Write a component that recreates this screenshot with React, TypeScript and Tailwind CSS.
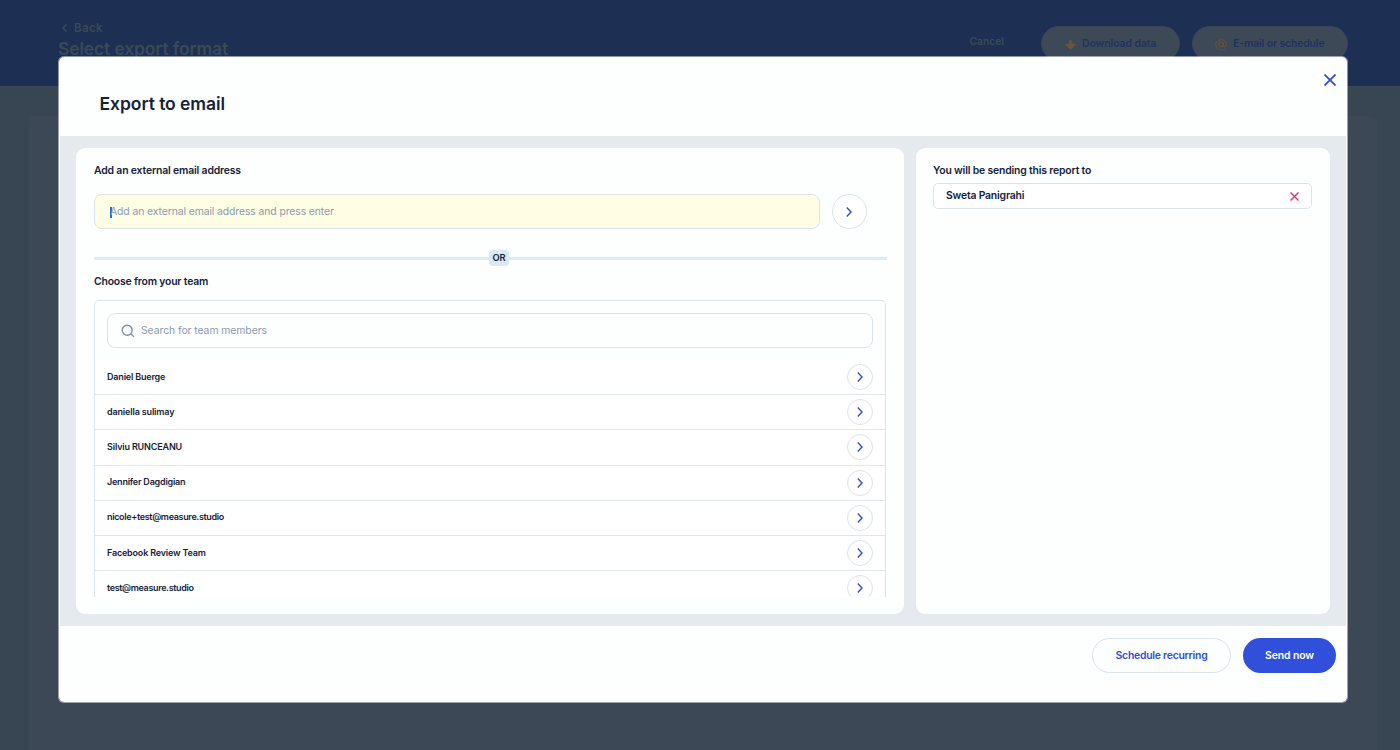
import type { ReactNode } from "react";

const members = [
  { name: "Daniel Buerge", tracking: "tracking-[-0.182px]" },
  { name: "daniella sulimay", tracking: "tracking-[-0.15px]" },
  { name: "Silviu RUNCEANU", tracking: "tracking-[-0.164px]" },
  { name: "Jennifer Dagdigian", tracking: "tracking-[-0.221px]" },
  { name: "nicole+test@measure.studio", tracking: "tracking-[-0.332px]" },
  { name: "Facebook Review Team", tracking: "tracking-[-0.185px]" },
  { name: "test@measure.studio", tracking: "tracking-[-0.353px]" },
];

function Chevron() {
  return (
    <svg className="-ml-px" width="6" height="10" viewBox="0 0 6 10" fill="none" stroke="#2f4fdc" strokeWidth="1.4">
      <path d="M0.8 0.5 5 5 0.8 9.5" />
    </svg>
  );
}

function Cross({ size, color, width }: { size: number; color: string; width: number }) {
  return (
    <svg width={size} height={size} viewBox={`0 0 ${size} ${size}`} stroke={color} strokeWidth={width}>
      <path d={`M0.5 0.5 ${size - 0.5} ${size - 0.5} M${size - 0.5} 0.5 0.5 ${size - 0.5}`} />
    </svg>
  );
}

function Label({ children, className }: { children: ReactNode; className: string }) {
  return <h2 className={`text-[10.4px] leading-4 font-semibold whitespace-nowrap ${className}`}>{children}</h2>;
}

function PageBehind() {
  return (
    <div className="flex h-full flex-col">
      <header className="flex h-[86px] shrink-0 justify-between bg-[#1d2f52] pr-[52px] pl-[58px] text-[#3a4a57]">
        <div className="pt-[20px]">
          <div className="flex items-center gap-[7px] pl-[4px] text-[11.5px] leading-4 font-semibold tracking-[0.39px]">
            <svg width="5" height="8" viewBox="0 0 5 8" fill="none" stroke="currentColor" strokeWidth="1.4">
              <path d="M4.4 0.6 1 4l3.4 3.4" />
            </svg>
            Back
          </div>
          <h1 className="mt-[1px] text-[17.5px] leading-6 font-semibold tracking-[-0.15px]">Select export format</h1>
        </div>
        <div className="flex pt-[26px] text-[10.4px] font-semibold">
          <span className="mr-[37px] pt-[8px] leading-4 tracking-[-0.07px]">Cancel</span>
          <div className="mr-[12px] flex h-[35px] w-[139px] items-center rounded-full border border-[#374555] bg-[#3e4957] pl-[23px] text-[#1f3360]">
            <svg className="mt-[2px] mr-[6px]" width="11" height="10" viewBox="0 0 11 10" fill="#65563c">
              <path d="M4.200 0h2.600v3.400q2 .3 4.200 0.800L5.500 10 0 4.200q2.200-.5 4.200-.8z" />
            </svg>
            <span className="tracking-[-0.05px]">Download data</span>
          </div>
          <div className="flex h-[35px] w-[156px] items-center rounded-full border border-[#374555] bg-[#3e4957] pl-[22px] text-[#1f3360]">
            <svg className="mt-[2px] mr-[6px]" width="12" height="12" viewBox="0 0 24 24" fill="none" stroke="#5f533e" strokeWidth="2.2">
              <circle cx="12" cy="11" r="4.500" />
              <path d="M16.500 6.500v6a3 3 0 0 0 6 0V11A10.500 10 0 1 0 12 21.500h9" />
            </svg>
            <span className="tracking-[-0.117px]">E-mail or schedule</span>
          </div>
        </div>
      </header>
      <main className="flex grow pt-[30px] pr-[23px] pl-[29px]">
        <div className="grow rounded-t-md bg-[#3d4856]" />
      </main>
    </div>
  );
}

export default function App() {
  return (
    <div className="relative h-[750px] w-[1400px] overflow-hidden bg-[#384552] font-['Inter',sans-serif] text-[#14233a]">
      <PageBehind />
      <div className="absolute top-[56px] left-[58px] flex h-[647px] w-[1290px] flex-col overflow-hidden rounded-[6px] border border-white/50 bg-[#fdfefe] bg-clip-padding">
        <div className="flex h-[79px] shrink-0 justify-between pr-[11px] pl-[40.5px]">
          <h1 className="pt-[35px] text-[17.5px] leading-6 font-semibold tracking-[-0.05px]">Export to email</h1>
          <button className="mt-[17px] h-3 w-3">
            <Cross size={12} color="#2746dc" width={1.7} />
          </button>
        </div>

        <div className="mx-px flex h-[490px] shrink-0 gap-[12px] bg-[#e5eaee] px-[16px] py-[12px]">
          <section className="flex w-[828px] flex-col rounded-[9px] bg-[#fdfefe] pt-[15px] pr-[18px] pb-[17px] pl-[18px]">
            <Label className="tracking-[-0.158px]">Add an external email address</Label>
            <div className="mt-[15px] flex gap-[12px]">
              <div className="flex h-[35px] w-[726px] items-center rounded-[8px] border border-[#dbe3e9] bg-[#fffde3] pt-px pl-[15px]">
                <span className="h-[11px] w-[2px] bg-[#1473ff]" />
                <span className="-ml-[2px] text-[10.4px] tracking-[-0.098px] text-[#8a9bab]">
                  Add an external email address and press enter
                </span>
              </div>
              <button className="flex h-[35px] w-[35px] items-center justify-center rounded-full border border-[#dbe3e9] bg-white">
                <Chevron />
              </button>
            </div>
            <div className="mt-[21px] flex h-[16px] items-center">
              <span className="h-[3px] grow bg-[#dcecf7]" />
              <span className="flex h-[16px] w-[20px] items-center justify-center rounded-[4px] bg-[#d8eaf6] text-[9.3px] font-semibold">
                OR
              </span>
              <span className="-mr-px h-[3px] w-[378px] bg-[#dcecf7]" />
            </div>
            <Label className="mt-[8px] tracking-[-0.175px]">Choose from your team</Label>
            <div className="mt-[10px] min-h-0 grow overflow-hidden rounded-t-[5px] border border-b-0 border-[#dbe3e9]">
              <div className="p-[12px]">
                <div className="flex h-[35px] items-center rounded-[8px] border border-[#dbe3e9] pl-[13px]">
                  <svg width="14" height="14" viewBox="0 0 14 14" fill="none" stroke="#7d91a8" strokeWidth="1.4">
                    <circle cx="6.200" cy="6.200" r="5" />
                    <path d="M9.800 9.800 13 12.700" />
                  </svg>
                  <span className="ml-[6px] text-[10.4px] tracking-[-0.065px] text-[#8a9bb0]">Search for team members</span>
                </div>
              </div>
              <ul>
                {members.map((m) => (
                  <li
                    key={m.name}
                    className="flex h-[35.2px] items-center justify-between border-b border-[#e0e6eb] bg-white px-[12px]"
                  >
                    <span className={`pb-[1.5px] text-[9px] font-semibold ${m.tracking}`}>{m.name}</span>
                    <button className="flex h-[26px] w-[26px] items-center justify-center rounded-full border border-[#dbe3e9] bg-white">
                      <Chevron />
                    </button>
                  </li>
                ))}
              </ul>
            </div>
          </section>

          <section className="w-[414px] rounded-[9px] bg-[#fdfefe] pt-[15px] pr-[18px] pl-[17px]">
            <Label className="tracking-[-0.165px]">You will be sending this report to</Label>
            <div className="mt-[4px] flex h-[26px] items-center justify-between rounded-[5px] border border-[#dbe3e9] bg-white pr-[12px] pl-[12px]">
              <span className="text-[10.4px] font-semibold tracking-[-0.185px]">Sweta Panigrahi</span>
              <Cross size={9} color="#f0266f" width={1.4} />
            </div>
          </section>
        </div>

        <div className="flex justify-end gap-[12px] pt-[12px] pr-[11px] text-[10.4px] font-semibold">
          <button className="h-[35px] w-[139px] rounded-full border border-[#dbe3e9] tracking-[-0.235px] text-[#2f4fdc]">
            Schedule recurring
          </button>
          <button className="h-[35px] w-[93px] rounded-full bg-[#3050dc] tracking-[-0.08px] text-white">Send now</button>
        </div>
      </div>
    </div>
  );
}
